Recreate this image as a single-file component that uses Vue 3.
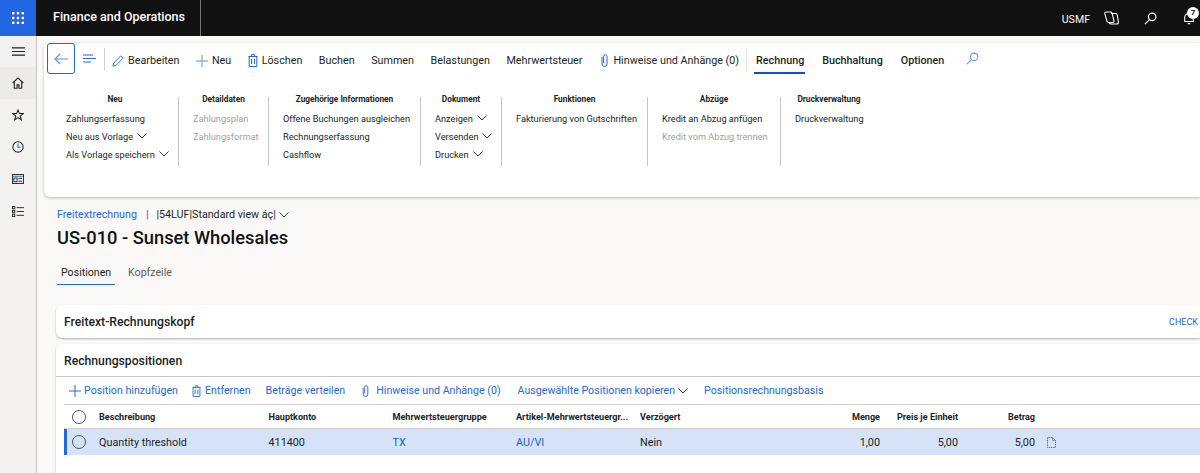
<script setup>
const ribbon = [
  { title: 'Neu', width: 127, items: [
    { label: 'Zahlungserfassung' },
    { label: 'Neu aus Vorlage', menu: true },
    { label: 'Als Vorlage speichern', menu: true },
  ] },
  { title: 'Detaildaten', width: 90, items: [
    { label: 'Zahlungsplan', off: true },
    { label: 'Zahlungsformat', off: true },
  ] },
  { title: 'Zugehörige Informationen', width: 152, items: [
    { label: 'Offene Buchungen ausgleichen' },
    { label: 'Rechnungserfassung' },
    { label: 'Cashflow' },
  ] },
  { title: 'Dokument', width: 81, items: [
    { label: 'Anzeigen', menu: true },
    { label: 'Versenden', menu: true },
    { label: 'Drucken', menu: true },
  ] },
  { title: 'Funktionen', width: 146, items: [
    { label: 'Fakturierung von Gutschriften' },
  ] },
  { title: 'Abzüge', width: 133, items: [
    { label: 'Kredit an Abzug anfügen' },
    { label: 'Kredit vom Abzug trennen', off: true },
  ] },
  { title: 'Druckverwaltung', width: 96, items: [
    { label: 'Druckverwaltung' },
  ] },
]

const columns = [
  { key: 'desc', label: 'Beschreibung', width: 169.5 },
  { key: 'account', label: 'Hauptkonto', width: 124 },
  { key: 'tax', label: 'Mehrwertsteuergruppe', width: 123.5 },
  { key: 'itemTax', label: 'Artikel-Mehrwertsteuergr...', width: 124 },
  { key: 'late', label: 'Verzögert', width: 136 },
  { key: 'qty', label: 'Menge', width: 104, right: true },
  { key: 'price', label: 'Preis je Einheit', width: 78, right: true },
  { key: 'amount', label: 'Betrag', width: 77, right: true },
]

const row = {
  desc: 'Quantity threshold',
  account: '411400',
  tax: 'TX',
  itemTax: 'AU/VI',
  late: 'Nein',
  qty: '1,00',
  price: '5,00',
  amount: '5,00',
}
</script>

<template>
  <div class="app">
    <header class="topbar">
      <div class="waffle">
        <svg width="12" height="12" viewBox="0 0 12 12" fill="#fff">
          <rect x="0" y="0" width="2.4" height="2.4" /><rect x="4.8" y="0" width="2.4" height="2.4" /><rect x="9.6" y="0" width="2.4" height="2.4" />
          <rect x="0" y="4.8" width="2.4" height="2.4" /><rect x="4.8" y="4.8" width="2.4" height="2.4" /><rect x="9.6" y="4.8" width="2.4" height="2.4" />
          <rect x="0" y="9.6" width="2.4" height="2.4" /><rect x="4.8" y="9.6" width="2.4" height="2.4" /><rect x="9.6" y="9.6" width="2.4" height="2.4" />
        </svg>
      </div>
      <div class="brand">Finance and Operations</div>
      <div class="top-right">
        <span class="company">USMF</span>
        <svg class="copilot" width="16" height="14" viewBox="0 0 16 14" fill="none" stroke="#fff" stroke-width="1.100" stroke-linejoin="round">
          <path d="M3 1h4.500c.8 0 1.300.4 1.500 1.100l2 7.800c.2.900-.3 1.600-1.200 1.600H5.500c-.8 0-1.300-.4-1.500-1.100L1.800 2.700C1.600 1.800 2.100 1 3 1z" />
          <path d="M8 2.500h4.500c1 0 1.500.5 1.700 1.300l1.200 7c.2 1.100-.5 2.200-1.700 2.200H8c-1 0-1.600-.5-1.900-1.500" />
        </svg>
        <svg class="top-search" width="13" height="13" viewBox="0 0 14 14" fill="none" stroke="#fff" stroke-width="1.300">
          <circle cx="8.800" cy="5.200" r="4" />
          <path d="M5.800 8.200 1 13" />
        </svg>
        <span class="bell">
          <svg width="12" height="13" viewBox="0 0 14 15" fill="none" stroke="#fff" stroke-width="1.300">
            <path d="M2 11V6.500a5 5 0 0 1 10 0V11H2zM5.500 13.500h3" />
          </svg>
          <span class="badge">7</span>
        </span>
      </div>
    </header>

    <div class="body">
      <nav class="sidebar">
        <div class="side-item menu">
          <svg width="13" height="9" viewBox="0 0 13 9" stroke="#222" stroke-width="1.200"><path d="M0 .8h13M0 4.500h13M0 8.200h13" /></svg>
        </div>
        <div class="side-item active">
          <svg width="12" height="12" viewBox="0 0 13 13" fill="none" stroke="#222" stroke-width="1.200">
            <path d="M.8 6.500 6.500 1l5.700 5.500M2.500 5.500v6.700h3V8.500h2v3.700h3V5.500" />
          </svg>
        </div>
        <div class="side-item">
          <svg width="12" height="12" viewBox="0 0 13 13" fill="none" stroke="#222" stroke-width="1.100">
            <path d="M6.500 1 8 5h4.200L8.900 7.500l1.200 4.300-3.600-2.500-3.600 2.500 1.200-4.300L.8 5H5z" />
          </svg>
        </div>
        <div class="side-item">
          <svg width="12" height="12" viewBox="0 0 13 13" fill="none" stroke="#222" stroke-width="1.100">
            <circle cx="6.500" cy="6.500" r="5.600" />
            <path d="M6.500 3v3.800H9.500" stroke="#1f5fc4" />
          </svg>
        </div>
        <div class="side-item">
          <svg width="12" height="10" viewBox="0 0 13 11" fill="none" stroke="#222" stroke-width="1">
            <rect x=".5" y=".5" width="12" height="10" />
            <path d="M.5 2.500h12" stroke="#1f5fc4" />
            <rect x="2" y="4.500" width="3.500" height="4" />
            <path d="M7 5h4M7 8h4" />
          </svg>
        </div>
        <div class="side-item">
          <svg width="12" height="11" viewBox="0 0 13 12" fill="none" stroke="#222" stroke-width="1">
            <rect x=".5" y=".5" width="2.500" height="2.500" /><rect x=".5" y="4.800" width="2.500" height="2.500" /><rect x=".5" y="9" width="2.500" height="2.500" />
            <path d="M5 1.800h8M5 6h8M5 10.200h8" />
          </svg>
        </div>
      </nav>

      <main class="content">
        <section class="action-pane">
          <div class="action-bar">
            <button class="back">
              <svg width="14" height="12" viewBox="0 0 14 12" fill="none" stroke="#5b8def" stroke-width="1.100"><path d="M6 1 1 6l5 5M1 6h13" /></svg>
            </button>
            <span class="list-btn">
              <svg width="13" height="9" viewBox="0 0 13 9" stroke="#2266e3" stroke-width="1.100"><path d="M0 1h10M0 4.500h13M0 8h8" /></svg>
            </span>
            <span class="bar-sep"></span>
            <span class="action first">
              <svg width="12" height="12" viewBox="0 0 13 13" fill="none" stroke="#2266e3" stroke-width="1"><path d="M1 12l.8-3.300L9.500 1l2.500 2.500-7.700 7.700L1 12z" /></svg>
              Bearbeiten
            </span>
            <span class="action">
              <svg width="12" height="12" viewBox="0 0 12 12" stroke="#5b8def" stroke-width="1"><path d="M6 0v12M0 6h12" /></svg>
              Neu
            </span>
            <span class="action">
              <svg width="10" height="13" viewBox="0 0 10 13" fill="none" stroke="#2266e3" stroke-width="1"><path d="M.5 2.500h9M3.500 2.500V.7h3v1.800M1.200 2.500v10h7.600v-10M3.500 5v5M6.500 5v5" /></svg>
              Löschen
            </span>
            <span class="action">Buchen</span>
            <span class="action">Summen</span>
            <span class="action">Belastungen</span>
            <span class="action">Mehrwertsteuer</span>
            <span class="action notes">
              <svg width="7" height="13" viewBox="0 0 7 13" fill="none" stroke="#2266e3" stroke-width="1"><path d="M1 3v7a2.500 2.500 0 0 0 5 0V2.500a1.700 1.700 0 0 0-3.400 0V9" /></svg>
              Hinweise und Anhänge (0)
            </span>
            <span class="bar-sep light"></span>
            <span class="action tab active">Rechnung</span>
            <span class="action tab">Buchhaltung</span>
            <span class="action tab">Optionen</span>
            <svg class="pane-search" width="13" height="13" viewBox="0 0 14 14" fill="none" stroke="#5b8def" stroke-width="1.100">
              <circle cx="8.800" cy="5.200" r="4" />
              <path d="M5.800 8.200 1 13" />
            </svg>
          </div>

          <div class="ribbon">
            <div v-for="group in ribbon" :key="group.title" class="group" :style="{ width: group.width + 'px' }">
              <div class="group-title">{{ group.title }}</div>
              <div v-for="item in group.items" :key="item.label" class="group-item" :class="{ off: item.off }">
                {{ item.label }}
                <svg v-if="item.menu" width="10" height="6" viewBox="0 0 10 6" fill="none" stroke="#333" stroke-width="1"><path d="M.5.500 5 5 9.500.500" /></svg>
              </div>
            </div>
          </div>
        </section>

        <div class="crumb">
          <span class="crumb-link">Freitextrechnung</span>
          <span class="crumb-bar">|</span>
          <span class="crumb-view">|54LUF|Standard view áç|</span>
          <svg width="10" height="6" viewBox="0 0 10 6" fill="none" stroke="#333" stroke-width="1"><path d="M.5.500 5 5 9.500.500" /></svg>
        </div>
        <h1 class="title">US-010 - Sunset Wholesales</h1>

        <div class="tabs">
          <span class="page-tab active">Positionen</span>
          <span class="page-tab">Kopfzeile</span>
        </div>

        <section class="card header-card">
          <span class="card-title">Freitext-Rechnungskopf</span>
          <span class="check">CHECK</span>
        </section>

        <section class="card lines-card">
          <div class="lines-head"><span class="card-title">Rechnungspositionen</span></div>
          <div class="grid-bar">
            <span class="grid-action">
              <svg width="12" height="12" viewBox="0 0 12 12" stroke="#2266e3" stroke-width="1"><path d="M6 0v12M0 6h12" /></svg>
              Position hinzufügen
            </span>
            <span class="grid-action">
              <svg width="9" height="12" viewBox="0 0 10 13" fill="none" stroke="#2266e3" stroke-width="1"><path d="M.5 2.500h9M3.500 2.500V.7h3v1.800M1.200 2.500v10h7.600v-10M3.500 5v5M6.500 5v5" /></svg>
              Entfernen
            </span>
            <span class="grid-action">Beträge verteilen</span>
            <span class="grid-action">
              <svg width="7" height="12" viewBox="0 0 7 13" fill="none" stroke="#2266e3" stroke-width="1"><path d="M1 3v7a2.500 2.500 0 0 0 5 0V2.500a1.700 1.700 0 0 0-3.400 0V9" /></svg>
              Hinweise und Anhänge (0)
            </span>
            <span class="grid-action">
              Ausgewählte Positionen kopieren
              <svg width="10" height="6" viewBox="0 0 10 6" fill="none" stroke="#333" stroke-width="1"><path d="M.5.500 5 5 9.500.500" /></svg>
            </span>
            <span class="grid-action">Positionsrechnungsbasis</span>
          </div>

          <div class="grid">
            <div class="grid-row grid-header">
              <span class="radio-cell"><span class="radio"></span></span>
              <span v-for="col in columns" :key="col.key" class="cell" :class="{ right: col.right }" :style="{ width: col.width + 'px' }">{{ col.label }}</span>
            </div>
            <div class="grid-row selected">
              <span class="radio-cell"><span class="radio"></span></span>
              <span v-for="col in columns" :key="col.key" class="cell" :class="{ right: col.right, link: col.key === 'tax' || col.key === 'itemTax' }" :style="{ width: col.width + 'px' }">{{ row[col.key] }}</span>
              <svg class="doc" width="9" height="11" viewBox="0 0 9 11" fill="none" stroke="#555" stroke-width=".8" stroke-dasharray="1.200 .6"><path d="M.5.500h5l3 3v7h-8zM5.500.500v3h3" /></svg>
            </div>
          </div>
        </section>
      </main>
    </div>
  </div>
</template>

<style>
html, body { margin: 0; overflow: hidden; }
</style>

<style scoped>
.app {
  width: 1200px;
  height: 473px;
  overflow: hidden;
  display: flex;
  flex-direction: column;
  font-family: Roboto, "Noto Sans", Arial, sans-serif;
  color: #201f1e;
  background: #faf9f8;
}
.topbar {
  height: 36px;
  flex: none;
  display: flex;
  align-items: stretch;
  background: #111;
  color: #fff;
}
.waffle {
  width: 36px;
  background: #2266e3;
  display: flex;
  align-items: center;
  justify-content: center;
}
.brand {
  width: 165px;
  box-sizing: border-box;
  padding-left: 17px;
  font-size: 12.500px;
  font-weight: 500;
  line-height: 34px;
  border-right: 1px solid #777;
}
.top-right {
  margin-left: auto;
  display: flex;
  align-items: center;
}
.company { font-size: 10.600px; margin: 2px 13px 0 0; }
.copilot { margin-right: 25px; }
.top-search { margin-right: 26px; }
.bell { position: relative; width: 17px; height: 13px; }
.bell svg { display: block; }
.badge {
  position: absolute;
  top: -5px;
  left: 4px;
  width: 12px;
  height: 12px;
  border-radius: 50%;
  background: #fff;
  color: #111;
  font-size: 8px;
  font-weight: 700;
  line-height: 12px;
  text-align: center;
}
.body { flex: 1; display: flex; min-height: 0; }
.sidebar {
  width: 36px;
  flex: none;
  background: #f3f2f1;
  border-right: 1px solid #c8c6c4;
}
.side-item {
  height: 32px;
  display: flex;
  align-items: center;
  justify-content: center;
}
.side-item.menu { height: 31px; }
.side-item.active { background: #ecebe9; }
.content { flex: 1; min-width: 0; padding: 7px 0 0 7px; }
.action-pane {
  height: 154px;
  background: #fff;
  border-radius: 6px 0 0 6px;
  box-shadow: 0 1px 3px rgba(0, 0, 0, .25);
}
.action-bar {
  height: 31px;
  padding-left: 3px;
  display: flex;
  align-items: stretch;
  font-size: 10.750px;
}
.back {
  width: 28px;
  height: 31px;
  padding: 0;
  border: 1px solid #2266e3;
  border-radius: 3px;
  background: #fff;
  display: flex;
  align-items: center;
  justify-content: center;
}
.list-btn { width: 29px; display: flex; align-items: center; justify-content: center; }
.bar-sep { width: 1px; height: 22px; margin-top: 5px; background: #d2d0ce; }
.bar-sep.light { margin-left: 7px; background: #e6e4e2; height: 24px; }
.action {
  display: inline-flex;
  align-items: center;
  gap: 4px;
  margin-left: 16.500px;
  padding-top: 4px;
  white-space: nowrap;
}
.action.first { margin-left: 7px; }
.action.notes { margin-left: 19px; gap: 5px; }
.action.tab { font-weight: 500; margin-left: 18px; }
.action.tab.active { position: relative; margin-left: 9px; }
.action.active::after {
  content: "";
  position: absolute;
  left: -2px;
  right: -1px;
  bottom: 0;
  height: 2px;
  background: #0f4fd8;
}
.pane-search { margin: 9px 0 0 22px; }
.ribbon { display: flex; padding: 23px 0 0 8px; }
.group {
  height: 69px;
  flex: none;
  padding: 0 14px;
  box-sizing: border-box;
  border-right: 1px solid #c8c6c4;
}
.group:last-child { border-right: 0; }
.group-title {
  font-size: 8.300px;
  font-weight: 700;
  line-height: 12px;
  text-align: center;
  margin: -4px 0 5px;
  white-space: nowrap;
}
.group-item {
  font-size: 9.200px;
  line-height: 18px;
  white-space: nowrap;
  display: flex;
  align-items: center;
  gap: 4px;
}
.group-item svg { flex: none; margin-top: -2px; }
.group-item.off { color: #a19f9d; }
.crumb {
  display: flex;
  align-items: center;
  gap: 5px;
  margin: 11px 0 0 13px;
  font-size: 10.700px;
  line-height: 14px;
}
.crumb svg { margin-left: -2px; }
.crumb-link { color: #2266e3; }
.crumb-bar { color: #2266e3; margin: 0 3px 0 4px; }
.title {
  margin: 4px 0 0 13px;
  font-size: 18.300px;
  font-weight: 500;
  line-height: 24px;
  color: #111;
}
.tabs { display: flex; margin: 10px 0 0 13px; gap: 9px; }
.page-tab {
  font-size: 10.600px;
  line-height: 23px;
  padding: 1px 4px 0;
  color: #605e5c;
  border-bottom: 1px solid transparent;
}
.page-tab.active { color: #201f1e; border-bottom-color: #2266e3; }
.card {
  margin-left: 12px;
  background: #fff;
  border-radius: 6px 0 0 6px;
  box-shadow: 0 1px 2px rgba(0, 0, 0, .3);
}
.header-card {
  height: 33px;
  margin-top: 20px;
  padding: 0 2px 0 8px;
  display: flex;
  align-items: center;
  justify-content: space-between;
}
.card-title { font-size: 12.200px; font-weight: 500; color: #201f1e; }
.check { font-size: 9px; color: #2266e3; }
.lines-card { margin-top: 6px; height: 200px; border-radius: 6px 0 0 0; }
.lines-head {
  height: 33px;
  box-sizing: border-box;
  padding: 1px 0 0 8px;
  display: flex;
  align-items: center;
  border-bottom: 1px solid #c8c6c4;
}
.grid-bar {
  height: 27px;
  padding-left: 13px;
  display: flex;
  align-items: center;
  font-size: 10.650px;
  color: #2266e3;
}
.grid-action { display: inline-flex; align-items: center; gap: 3px; white-space: nowrap; }
.grid-action:nth-child(2) { margin-left: 14px; gap: 4px; }
.grid-action:nth-child(3) { margin-left: 15px; }
.grid-action:nth-child(4) { margin-left: 17px; gap: 7px; }
.grid-action:nth-child(5) { margin-left: 17px; }
.grid-action:nth-child(6) { margin-left: 16px; }
.grid { margin-left: 8px; border-top: 1px solid #d2d0ce; }
.grid-row { display: flex; align-items: center; }
.grid-header { height: 24px; box-sizing: border-box; border-bottom: 1px solid #d2d0ce; font-size: 9.100px; font-weight: 700; }
.selected {
  height: 26px;
  background: #d5e2f8;
  border-left: 3px solid #2266e3;
  font-size: 10.800px;
}
.radio-cell { width: 35px; padding-left: 8px; box-sizing: border-box; display: flex; flex: none; }
.selected .radio-cell { width: 32px; padding-left: 5px; }
.radio {
  width: 14px;
  height: 14px;
  box-sizing: border-box;
  border: 1px solid #555;
  border-radius: 50%;
}
.cell { flex: none; white-space: nowrap; box-sizing: border-box; padding-right: 4px; }
.cell.right { text-align: right; padding-right: 0; }
.cell.link { color: #1f5fc4; }
.doc { margin-left: 12px; }
</style>
